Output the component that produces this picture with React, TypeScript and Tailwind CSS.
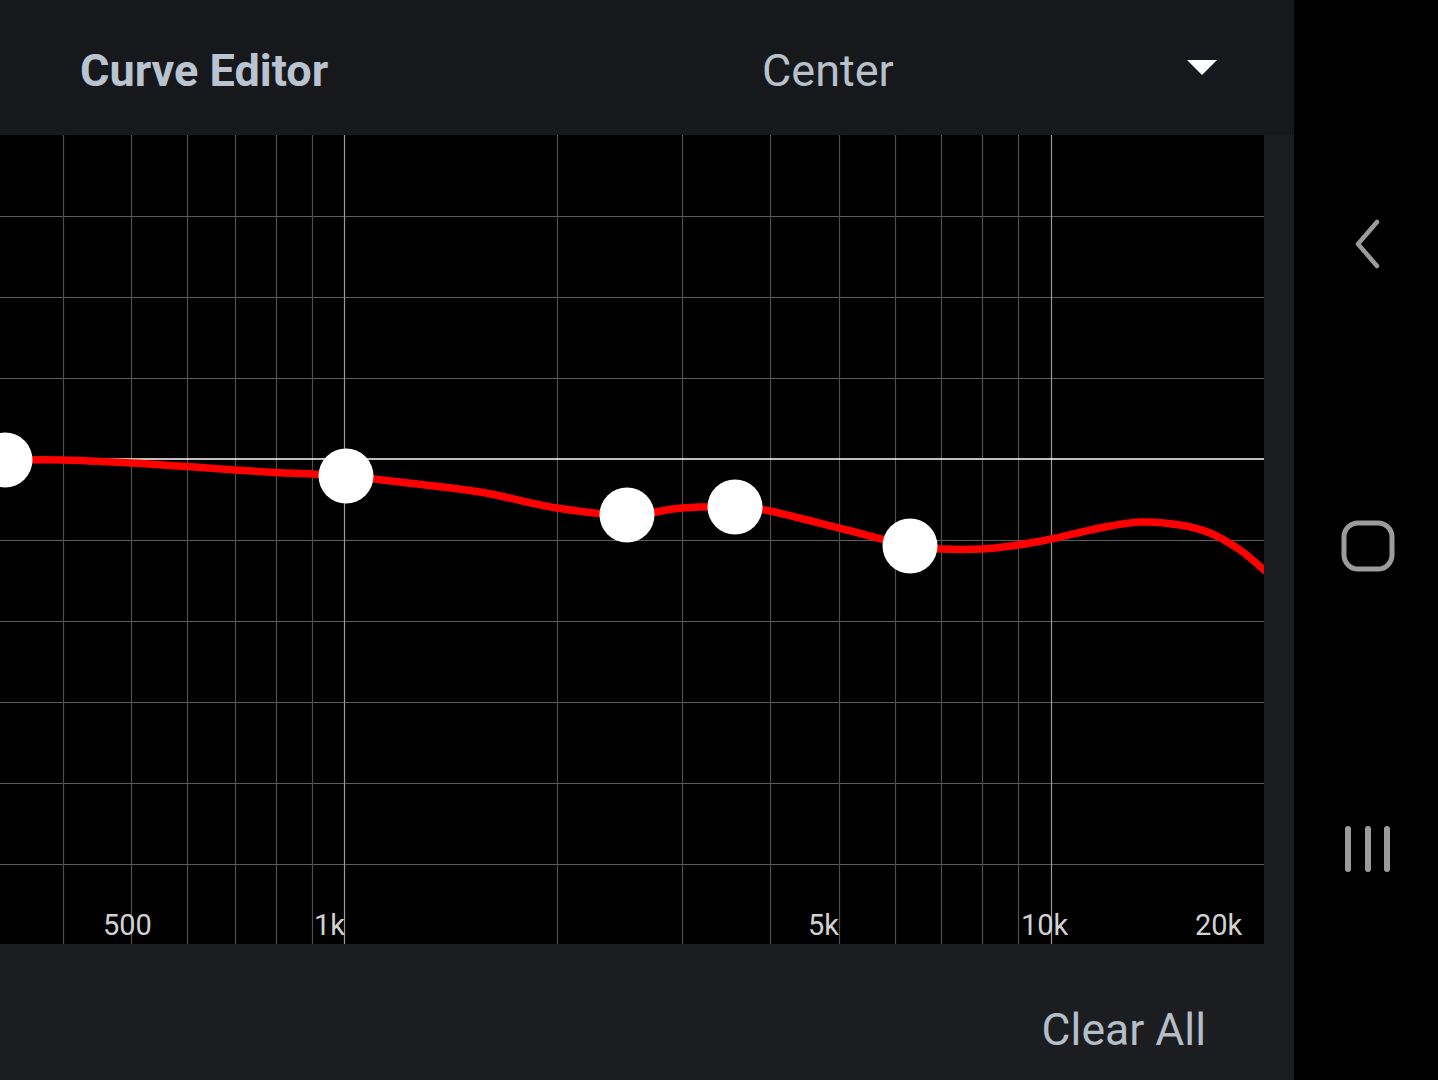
import React from 'react';

const W = 1264;
const H = 809;

// x position of each grid line (log frequency), 1k and 10k drawn brighter
const vLines = [63, 131, 187, 235, 276, 312, 557, 682, 770, 839, 895, 941, 982, 1018];
const majorLines = [344, 1051];
const hLines = [81, 162, 243, 405, 486, 567, 648, 729];
const zeroLine = 324;

const labels = [
  { text: '500', x: 103 },
  { text: '1k', x: 314 },
  { text: '5k', x: 808 },
  { text: '10k', x: 1021 },
  { text: '20k', x: 1195 },
];

const curve: [number, number][] = [
  [0, 324], [5, 325], [63, 325], [131, 328], [187, 331.5], [235, 335], [276, 337.5], [312, 339],
  [346, 341], [400, 347], [480, 357], [557, 373], [627, 380], [682, 373], [735, 372], [770, 376],
  [839, 393], [910, 411], [941, 414], [982, 414], [1018, 410], [1051, 404], [1100, 393],
  [1140, 387], [1180, 390], [1210, 398], [1240, 415], [1264, 435],
];

const handles: [number, number][] = [[5, 325], [346, 341], [627, 380], [735, 372], [910, 411]];

function smoothPath(pts: [number, number][]) {
  let d = `M ${pts[0][0]} ${pts[0][1]}`;
  for (let i = 0; i < pts.length - 1; i++) {
    const p0 = pts[i - 1] || pts[i];
    const p1 = pts[i];
    const p2 = pts[i + 1];
    const p3 = pts[i + 2] || p2;
    const c1x = p1[0] + (p2[0] - p0[0]) / 6;
    const c1y = p1[1] + (p2[1] - p0[1]) / 6;
    const c2x = p2[0] - (p3[0] - p1[0]) / 6;
    const c2y = p2[1] - (p3[1] - p1[1]) / 6;
    d += ` C ${c1x} ${c1y} ${c2x} ${c2y} ${p2[0]} ${p2[1]}`;
  }
  return d;
}

const Graph: React.FC = () => (
  <svg width={W} height={H} viewBox={`0 0 ${W} ${H}`} className="block bg-black">
    {hLines.map((y) => (
      <line key={y} x1={0} x2={W} y1={y + 0.5} y2={y + 0.5} stroke="#5e5e5e" strokeWidth={1.2} />
    ))}
    {vLines.map((x) => (
      <line key={x} x1={x + 0.5} x2={x + 0.5} y1={0} y2={H} stroke="#4f4f4f" strokeWidth={1.2} />
    ))}
    {majorLines.map((x) => (
      <line key={x} x1={x + 0.5} x2={x + 0.5} y1={0} y2={H} stroke="#9a9a9a" strokeWidth={1.2} />
    ))}
    <line x1={0} x2={W} y1={zeroLine} y2={zeroLine} stroke="#ffffff" strokeWidth={1.6} />
    {labels.map((l) => (
      <text
        key={l.text}
        x={l.x}
        y={800}
        fill="#d2d2d2"
        fontSize={29}
        fontFamily="Roboto, 'Noto Sans', sans-serif"
      >
        {l.text}
      </text>
    ))}
    <path d={smoothPath(curve)} fill="none" stroke="#ff0000" strokeWidth={7.5} strokeLinecap="round" />
    {handles.map(([x, y]) => (
      <circle key={x} cx={x} cy={y} r={27.5} fill="#ffffff" />
    ))}
  </svg>
);

const NavBar: React.FC = () => (
  <div className="w-[144px] h-full bg-black flex flex-col items-center">
    <svg width="40" height="60" viewBox="0 0 40 60" className="mt-[214px] ml-[8px]">
      <path d="M 27 8 L 8 30 L 27 52" fill="none" stroke="#9b9b9b" strokeWidth={4.5} strokeLinecap="round" strokeLinejoin="round" />
    </svg>
    <svg width="60" height="60" viewBox="0 0 60 60" className="mt-[241px] ml-[4px]">
      <rect x={6} y={8} width={48} height={46} rx={14} fill="none" stroke="#9b9b9b" strokeWidth={5} />
    </svg>
    <svg width="60" height="56" viewBox="0 0 60 56" className="mt-[248px] ml-[4px]">
      <line x1={10} x2={10} y1={6} y2={46} stroke="#9b9b9b" strokeWidth={6} strokeLinecap="round" />
      <line x1={30} x2={30} y1={6} y2={46} stroke="#9b9b9b" strokeWidth={6} strokeLinecap="round" />
      <line x1={49} x2={49} y1={6} y2={46} stroke="#9b9b9b" strokeWidth={6} strokeLinecap="round" />
    </svg>
  </div>
);

export default function App() {
  return (
    <div className="w-[1438px] h-[1080px] flex overflow-hidden bg-black" style={{ fontFamily: "Roboto, 'Noto Sans', sans-serif" }}>
      <div className="w-[1294px] h-full flex flex-col bg-[#1b1d21]">
        {/* Header */}
        <header className="h-[135px] shrink-0 bg-[#16181c] flex items-center pt-[6px] pl-[80px]">
          <span className="w-[682px] text-[45px] leading-none font-bold text-[#b9c4d0]">Curve Editor</span>
          <span className="w-[425px] text-[45px] leading-none text-[#b7c1cc]">Center</span>
          <svg width="30" height="15" viewBox="0 0 30 15" className="mt-[-6px]">
            <path d="M 0 0 L 30 0 L 15 15 Z" fill="#ffffff" />
          </svg>
        </header>

        {/* Graph */}
        <div className="flex shrink-0">
          <Graph />
          <div className="flex-1 bg-[#1b1d21]" />
        </div>

        {/* Footer */}
        <div className="flex-1 flex justify-end items-start pt-[64px] pr-[88px]">
          <button className="text-[44.5px] leading-none text-[#b4bec9]">Clear All</button>
        </div>
      </div>
      <NavBar />
    </div>
  );
}
